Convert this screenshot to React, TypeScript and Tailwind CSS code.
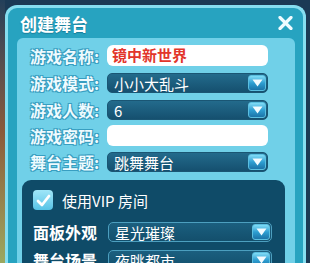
import React from 'react';

const FONT = '"Noto Sans CJK SC", "Noto Sans", sans-serif';

const labelCls =
  'w-[77px] shrink-0 text-[16px] leading-none font-bold text-[#eefbff] [text-shadow:0_0_1px_#2b8fb3,1px_1px_0_#3aa0c2,-1px_-1px_0_#3aa0c2,1px_-1px_0_#3aa0c2,-1px_1px_0_#3aa0c2]';

function Arrow() {
  return (
    <div className="w-[18px] h-full shrink-0 rounded-[3px] bg-gradient-to-b from-[#7fdcf6] via-[#2e9fd2] to-[#1c74a8] border border-[#5bbfe0] flex items-center justify-center">
      <svg width="11" height="8" viewBox="0 0 11 8">
        <path d="M0.5 0.5 L10.5 0.5 L5.5 7.5 Z" fill="#f2fbff" />
      </svg>
    </div>
  );
}

function Select({ value, dark }: { value: string; dark?: boolean }) {
  return (
    <div
      className={
        'flex-1 h-[20px] flex items-stretch rounded-[5px] p-[1px] ' +
        (dark
          ? 'bg-gradient-to-b from-[#1b5f7f] to-[#134f6c] border border-[#4c9fbf]'
          : 'bg-gradient-to-b from-[#236b8c] to-[#15506f] border border-[#1a5674]')
      }
    >
      <span className="flex-1 pl-[5px] text-[15px] leading-[18px] text-white">{value}</span>
      <Arrow />
    </div>
  );
}

function Row({ label, children, mt }: { label: string; children: React.ReactNode; mt: string }) {
  return (
    <div className={'flex items-center pl-[13px] pr-[27px] ' + mt}>
      <span className={labelCls}>{label}</span>
      {children}
    </div>
  );
}

export default function App() {
  return (
    <div
      className="w-[310px] h-[263px] overflow-hidden flex bg-[#1b3a55]"
      style={{ fontFamily: FONT }}
    >
      <div className="w-[5px] shrink-0 bg-gradient-to-b from-[#23405a] via-[#8a5a3a] to-[#9aa860]" />
      <div className="flex-1 pt-[5px] flex flex-col">
        <div className="w-[301px] flex-1 flex flex-col bg-[#27a3c0] border-[3px] border-b-0 border-[#86def0] rounded-t-[12px]">
          <div className="h-[30px] shrink-0 flex items-center justify-between pl-[12px] pr-[10px]">
            <span className="text-[17px] font-bold text-white leading-none [text-shadow:0_1px_1px_#1a7d99]">
              创建舞台
            </span>
            <svg width="15" height="14" viewBox="0 0 15 14">
              <path d="M2 1.5 L13 12.5 M13 1.5 L2 12.5" stroke="#eefbff" strokeWidth="3.2" strokeLinecap="round" />
            </svg>
          </div>
          <div className="flex-1 ml-[9px] mr-[8px] bg-[#70d0e8] rounded-t-[6px] pt-[7px] flex flex-col">
            <Row label="游戏名称:" mt="">
              <div className="flex-1 h-[21px] rounded-[6px] bg-white flex items-center pl-[5px] text-[15px] font-bold text-[#e2352b]">
                镜中新世界
              </div>
            </Row>
            <Row label="游戏模式:" mt="mt-[7px]">
              <Select value="小小大乱斗" />
            </Row>
            <Row label="游戏人数:" mt="mt-[7px]">
              <Select value="6" />
            </Row>
            <Row label="游戏密码:" mt="mt-[5px]">
              <div className="flex-1 h-[21px] rounded-[6px] bg-white" />
            </Row>
            <Row label="舞台主题:" mt="mt-[6px]">
              <Select value="跳舞舞台" />
            </Row>
            <div className="flex-1 mt-[8px] ml-[5px] mr-[10px] bg-[#0f4b68] rounded-t-[9px] pt-[10px] pl-[11px] pr-[13px] flex flex-col">
              <div className="flex items-center gap-[9px]">
                <div className="w-[20px] h-[20px] rounded-[4px] bg-gradient-to-b from-[#9fe6f8] to-[#56c3e6] flex items-center justify-center">
                  <svg width="15" height="13" viewBox="0 0 15 13">
                    <path d="M2 7 L6 11 L13 2" stroke="white" strokeWidth="2.8" fill="none" strokeLinecap="round" strokeLinejoin="round" />
                  </svg>
                </div>
                <span className="text-[15px] text-white leading-none">使用VIP 房间</span>
              </div>
              <div className="flex items-center mt-[12px]">
                <span className="w-[75px] shrink-0 text-[16px] font-bold text-white leading-none">面板外观</span>
                <Select value="星光璀璨" dark />
              </div>
              <div className="flex items-center mt-[8px]">
                <span className="w-[75px] shrink-0 text-[16px] font-bold text-white leading-none">舞台场景</span>
                <Select value="夜眺都市" dark />
              </div>
            </div>
          </div>
        </div>
      </div>
    </div>
  );
}
